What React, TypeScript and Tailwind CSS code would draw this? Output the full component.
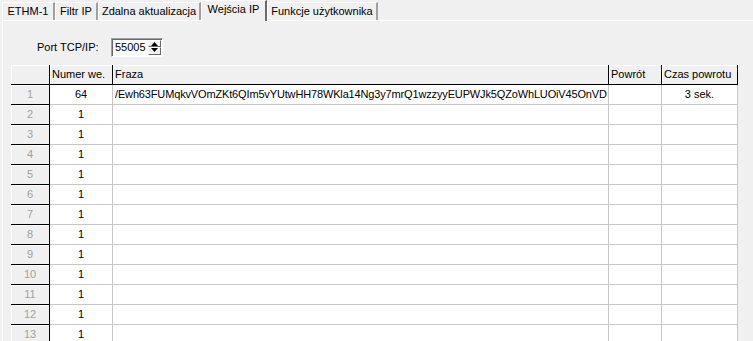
import React from 'react';

const tabs = [
  { label: 'ETHM-1', w: 'w-[53px]' },
  { label: 'Filtr IP', w: 'w-[43px]' },
  { label: 'Zdalna aktualizacja', w: 'w-[103px]' },
  { label: 'Wejścia IP', w: 'w-[66px]', active: true },
  { label: 'Funkcje użytkownika', w: 'w-[111px]' },
];

const phrase = '/Ewh63FUMqkvVOmZKt6QIm5vYUtwHH78WKla14Ng3y7mrQ1wzzyyEUPWJk5QZoWhLUOiV45OnVD';

const rows = Array.from({ length: 13 }, (_, i) => ({
  n: i + 1,
  num: i === 0 ? '64' : '1',
  fraza: i === 0 ? phrase : '',
  powrot: '',
  czas: i === 0 ? '3 sek.' : '',
}));

function Tab({ label, w, active }: { label: string; w: string; active?: boolean }) {
  if (active) {
    return (
      <div
        className={`${w} h-[21px] -mb-px z-10 bg-[#f0f0f0] border-t border-l border-white border-r-2 border-r-[#696969] flex items-center justify-center pb-[3px]`}
      >
        {label}
      </div>
    );
  }
  return (
    <div
      className={`${w} h-[18px] bg-[#f0f0f0] border-t border-l border-white border-r-2 border-r-[#a0a0a0] flex items-center justify-center`}
    >
      {label}
    </div>
  );
}

function Spin() {
  return (
    <div className="w-[52px] h-[19px] bg-white border border-t-[#a0a0a0] border-l-[#a0a0a0] border-r-white border-b-white shadow-[inset_1px_1px_0_#696969] flex items-center">
      <span className="pl-[3px] flex-1 leading-none">55005</span>
      <div className="w-[13px] h-[15px] mr-[1px] flex flex-col">
        <div className="flex-1 bg-[#f0f0f0] border-t border-l border-white border-r border-b border-r-[#696969] border-b-[#696969] flex items-end justify-center">
          <svg width="7" height="4" viewBox="0 0 7 4"><path d="M3.5 0 L7 4 L0 4 Z" fill="#000" /></svg>
        </div>
        <div className="flex-1 bg-[#f0f0f0] border-t border-l border-white border-r border-b border-r-[#696969] border-b-[#696969] flex items-start justify-center">
          <svg width="7" height="4" viewBox="0 0 7 4"><path d="M0 0 L7 0 L3.5 4 Z" fill="#000" /></svg>
        </div>
      </div>
    </div>
  );
}

const fixedCell =
  'h-[20px] bg-[#f0f0f0] border-r border-b border-black shadow-[inset_1px_1px_0_#fff] flex items-center';
const dataCell = 'h-[20px] bg-white border-r border-b border-[#c8c8c8] flex items-center overflow-hidden whitespace-nowrap';

export default function App() {
  return (
    <div
      className="w-[753px] h-[341px] overflow-hidden bg-[#f0f0f0] text-[11px] text-black"
      style={{ fontFamily: '"Liberation Sans", Arial, sans-serif' }}
    >
      <div className="h-[20px] flex items-end pl-[2px]">
        {tabs.map((t) => (
          <Tab key={t.label} {...t} />
        ))}
      </div>
      <div className="ml-[2px] h-[321px] border-t border-l border-white">
        <div className="flex items-center h-[44px] pt-[8px] pl-[34px]">
          <span className="w-[74px]">Port TCP/IP:</span>
          <Spin />
        </div>
        <div className="ml-[8px] grid grid-cols-[39px_63px_496px_53px_76px] w-[727px]">
          <div className={fixedCell}></div>
          <div className={`${fixedCell} pl-[2px]`}>Numer we.</div>
          <div className={`${fixedCell} pl-[2px]`}>Fraza</div>
          <div className={`${fixedCell} pl-[2px]`}>Powrót</div>
          <div className={`${fixedCell} pl-[2px]`}>Czas powrotu</div>
          {rows.map((r) => (
            <React.Fragment key={r.n}>
              <div className={`${fixedCell} justify-center text-[#a0a0a0]`}>{r.n}</div>
              <div className={`${dataCell} justify-center`}>{r.num}</div>
              <div className={`${dataCell} pl-[2px] tracking-[-0.15px]`}>{r.fraza}</div>
              <div className={dataCell}>{r.powrot}</div>
              <div className={`${dataCell} justify-center`}>{r.czas}</div>
            </React.Fragment>
          ))}
        </div>
      </div>
    </div>
  );
}
